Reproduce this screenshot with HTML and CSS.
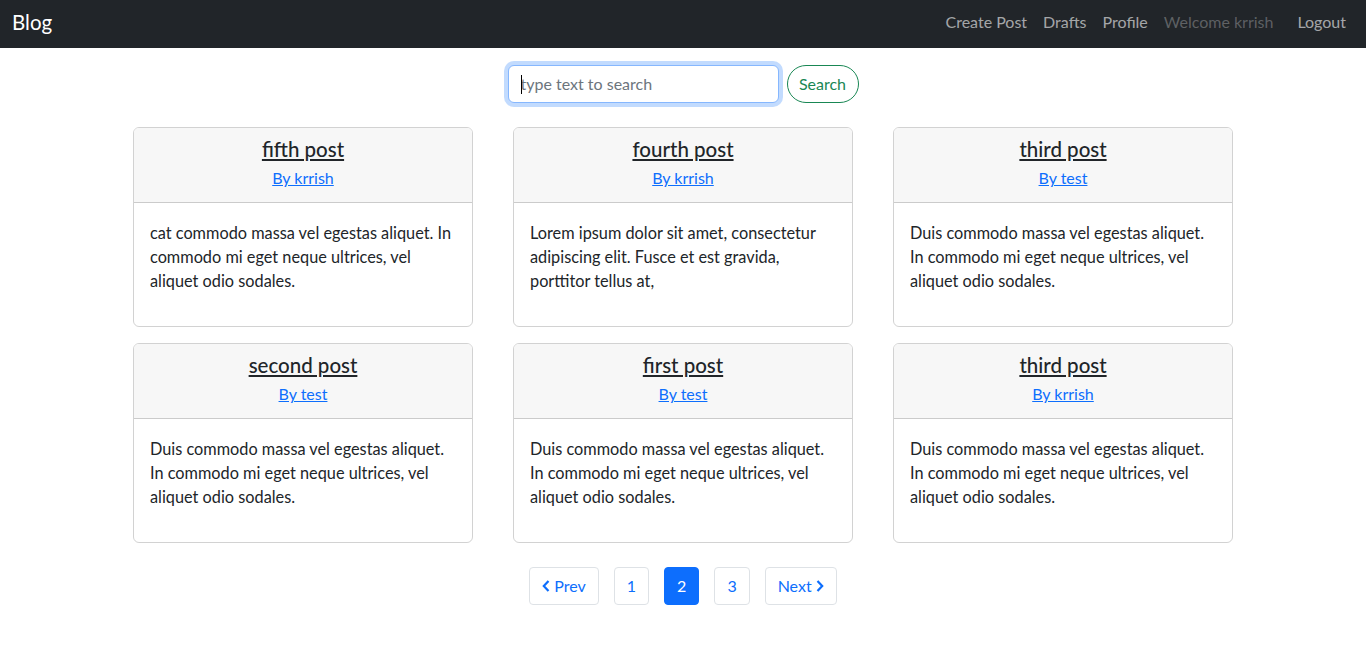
FILE: index.html
```html
<!DOCTYPE html>
<html lang="en">
<head>
<meta charset="utf-8">
<title>Blog</title>
<link rel="stylesheet" href="styles.css">
</head>
<body>
<nav class="navbar">
  <a class="brand" href="#">Blog</a>
  <ul class="nav">
    <li><a class="nav-link" href="#">Create Post</a></li>
    <li><a class="nav-link" href="#">Drafts</a></li>
    <li><a class="nav-link" href="#">Profile</a></li>
    <li><span class="nav-link disabled">Welcome krrish</span></li>
    <li class="logout"><a class="nav-link" href="#">Logout</a></li>
  </ul>
</nav>

<main class="main">
  <form class="search">
    <div class="search-input"><span class="caret"></span><input type="text" placeholder="type text to search"></div>
    <button type="button" class="search-btn">Search</button>
  </form>

  <div class="grid">
    <article class="card">
      <header class="card-header"><a class="title" href="#">fifth post</a><a class="author" href="#">By krrish</a></header>
      <div class="card-body"><p>cat commodo massa vel egestas aliquet. In commodo mi eget neque ultrices, vel aliquet odio sodales.</p></div>
    </article>
    <article class="card">
      <header class="card-header"><a class="title" href="#">fourth post</a><a class="author" href="#">By krrish</a></header>
      <div class="card-body"><p>Lorem ipsum dolor sit amet, consectetur adipiscing elit. Fusce et est gravida, porttitor tellus at,</p></div>
    </article>
    <article class="card">
      <header class="card-header"><a class="title" href="#">third post</a><a class="author" href="#">By test</a></header>
      <div class="card-body"><p>Duis commodo massa vel egestas aliquet. In commodo mi eget neque ultrices, vel aliquet odio sodales.</p></div>
    </article>
    <article class="card">
      <header class="card-header"><a class="title" href="#">second post</a><a class="author" href="#">By test</a></header>
      <div class="card-body"><p>Duis commodo massa vel egestas aliquet. In commodo mi eget neque ultrices, vel aliquet odio sodales.</p></div>
    </article>
    <article class="card">
      <header class="card-header"><a class="title" href="#">first post</a><a class="author" href="#">By test</a></header>
      <div class="card-body"><p>Duis commodo massa vel egestas aliquet. In commodo mi eget neque ultrices, vel aliquet odio sodales.</p></div>
    </article>
    <article class="card">
      <header class="card-header"><a class="title" href="#">third post</a><a class="author" href="#">By krrish</a></header>
      <div class="card-body"><p>Duis commodo massa vel egestas aliquet. In commodo mi eget neque ultrices, vel aliquet odio sodales.</p></div>
    </article>
  </div>

  <nav class="pagination">
    <a class="page" href="#"><svg class="chev" viewBox="0 0 8 12" width="8" height="12"><path d="M6.5 1 1.8 6 6.5 11" fill="none" stroke="currentColor" stroke-width="2.2"/></svg>Prev</a>
    <a class="page" href="#">1</a>
    <a class="page active" href="#">2</a>
    <a class="page" href="#">3</a>
    <a class="page" href="#">Next<svg class="chev" viewBox="0 0 8 12" width="8" height="12"><path d="M1.5 1 6.2 6 1.5 11" fill="none" stroke="currentColor" stroke-width="2.2"/></svg></a>
  </nav>
</main>
</body>
</html>
```
FILE: styles.css
```css
* { box-sizing: border-box; }
body {
  margin: 0;
  font-family: Lato, "Noto Sans", sans-serif;
  font-size: 16px;
  line-height: 1.5;
  color: #212529;
  background: #fff;
}
a { text-decoration: none; }

.navbar {
  height: 48px;
  background: #212529;
  display: flex;
  align-items: center;
  justify-content: space-between;
  padding: 0 12px 4px;
}
.brand {
  color: #fff;
  font-size: 20.5px;
  line-height: 30px;
}
.nav {
  list-style: none;
  margin: 0;
  padding: 0;
  display: flex;
  align-items: center;
}
.nav-link {
  display: block;
  padding: 8px 8px;
  color: rgba(255, 255, 255, 0.6);
  line-height: 24px;
}
.nav-link.disabled { color: rgba(255, 255, 255, 0.28); }
.logout { margin-left: 8px; }

.main {
  display: flex;
  flex-direction: column;
  align-items: center;
}

.search {
  margin-top: 17px;
  display: flex;
  gap: 8px;
}
.search-input {
  position: relative;
  width: 271px;
  height: 38px;
}
.search-input input {
  width: 100%;
  height: 100%;
  border: 1px solid #86b7fe;
  border-radius: 6px;
  box-shadow: 0 0 0 4px rgba(13, 110, 253, 0.25);
  padding: 5px 12px 7px;
  font: inherit;
  color: #212529;
  outline: none;
}
.search-input input::placeholder { color: #6c757d; }
.caret {
  position: absolute;
  left: 13px;
  top: 10px;
  width: 1px;
  height: 19px;
  background: #000;
}
.search-btn {
  height: 38px;
  width: 72px;
  border: 1px solid #198754;
  border-radius: 19px;
  background: #fff;
  color: #198754;
  font: inherit;
  padding: 0;
}

.grid {
  margin-top: 24px;
  display: grid;
  grid-template-columns: repeat(3, 340px);
  column-gap: 40px;
  row-gap: 16px;
}
.card {
  height: 200px;
  border: 1px solid rgba(0, 0, 0, 0.175);
  border-radius: 6px;
  overflow: hidden;
  display: flex;
  flex-direction: column;
}
.card-header {
  background: #f7f7f7;
  border-bottom: 1px solid rgba(0, 0, 0, 0.175);
  padding: 9px 16px 12px;
  display: flex;
  flex-direction: column;
  align-items: center;
}
.title {
  font-size: 20.5px;
  font-weight: 500;
  line-height: 24px;
  color: #212529;
  text-decoration: underline;
  text-underline-offset: 2px;
  margin-bottom: 5px;
}
.author {
  color: #0d6efd;
  text-decoration: underline;
  line-height: 24px;
}
.card-body {
  padding: 18px 16px 16px;
  font-size: 16.3px;
}
.card-body p { margin: 0; line-height: 24px; }

.pagination {
  margin-top: 24px;
  display: flex;
  gap: 15px;
}
.page {
  height: 38px;
  display: flex;
  align-items: center;
  gap: 4px;
  padding: 0 12px;
  border: 1px solid #dee2e6;
  border-radius: 4px;
  color: #0d6efd;
}
.page.active {
  background: #0d6efd;
  border-color: #0d6efd;
  color: #fff;
}
.chev { display: block; }
```
